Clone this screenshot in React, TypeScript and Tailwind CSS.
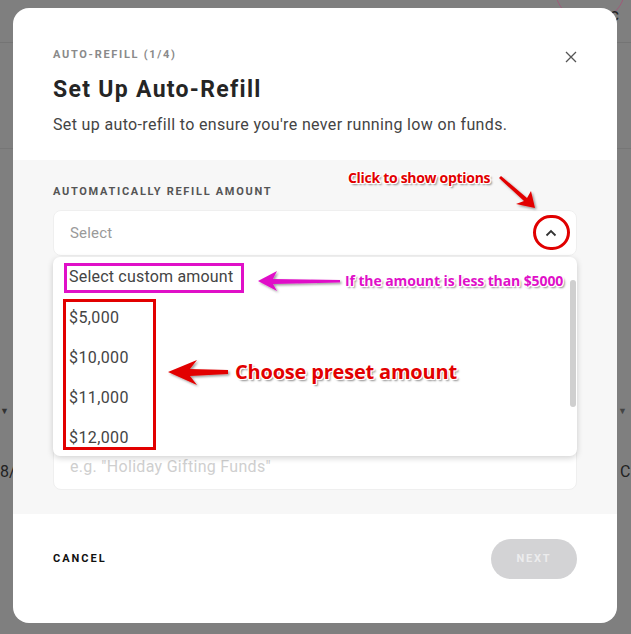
import React from "react";

const ui = { fontFamily: "Roboto, 'Liberation Sans', sans-serif" };
const ann = { fontFamily: "'Open Sans', 'Noto Sans', sans-serif" };

const outline =
  "[text-shadow:1px_1px_0_#fff,-1px_-1px_0_#fff,1px_-1px_0_#fff,-1px_1px_0_#fff,0_1px_0_#fff,0_-1px_0_#fff,1px_0_0_#fff,-1px_0_0_#fff,2px_2px_2px_rgba(0,0,0,0.45)]";

const options = ["$5,000", "$10,000", "$11,000", "$12,000"];

export default function App() {
  return (
    <div className="relative w-[631px] h-[634px] overflow-hidden bg-[#7f7f7f]" style={ui}>
      {/* underlying page fragments */}
      <div className="absolute inset-0 flex flex-col">
        <div className="h-[43px] border-b border-[#747474]" />
        <div className="h-[106px] border-b border-[#767676]" />
      </div>
      <div className="absolute left-[555px] top-[-40px] w-[70px] h-[60px] rounded-full border border-[#a05a7a]" />
      <div className="absolute left-[600px] top-[1px] text-[18px] text-[#222]">cc</div>
      <div className="absolute left-[0px] top-[405px] text-[9px] text-[#333]">▼</div>
      <div className="absolute left-[0px] top-[460px] text-[16px] text-[#222]">8/</div>
      <div className="absolute left-[618px] top-[405px] text-[9px] text-[#444]">▼</div>
      <div className="absolute left-[620px] top-[460px] text-[16px] text-[#222]">C</div>

      {/* modal */}
      <div className="absolute left-[13px] top-[8px] w-[604px] h-[615px] bg-white rounded-[16px] overflow-hidden flex flex-col">
        <div className="relative px-[40px] pt-[40px] h-[152px] shrink-0">
          <div className="text-[11px] font-bold tracking-[1.7px] text-[#8a8a8a] leading-[14px]">AUTO-REFILL (1/4)</div>
          <div className="mt-[14px] text-[23px] font-bold tracking-[1.3px] text-[#252525] leading-[28px]">Set Up Auto-Refill</div>
          <div className="mt-[11px] text-[16px] tracking-[0.35px] text-[#444] leading-[20px]">
            Set up auto-refill to ensure you're never running low on funds.
          </div>
          <svg className="absolute left-[552px] top-[43px]" width="12" height="12" viewBox="0 0 12 12">
            <path d="M1 1L11 11M11 1L1 11" stroke="#555" strokeWidth="1.3" fill="none" />
          </svg>
        </div>
        <div className="bg-[#f7f7f7] px-[40px] pt-[25px] h-[354px] shrink-0 flex flex-col">
          <div className="text-[11px] font-bold tracking-[1.7px] text-[#555] leading-[14px]">AUTOMATICALLY REFILL AMOUNT</div>
          <div className="relative mt-[11px] h-[46px] bg-white rounded-[8px] border border-[#efefef] flex items-center justify-between px-[16px]">
            <span className="text-[15px] tracking-[0.2px] text-[#9a9a9a]">Select</span>
            <svg width="12" height="8" viewBox="0 0 12 8" className="mr-[3px]">
              <path d="M1.5 6.5L6 2L10.5 6.5" stroke="#333" strokeWidth="1.8" fill="none" />
            </svg>
            {/* dropdown */}
            <div className="absolute left-[-1px] right-[-1px] top-[46px] h-[199px] bg-white rounded-[7px] shadow-[0_2px_6px_rgba(0,0,0,0.18)] z-10">
              <div className="flex flex-col pl-[16px] pt-[10px] text-[16px] tracking-[0.2px] text-[#444]">
                <div className="h-[41px] leading-[20px]">Select custom amount</div>
                {options.map((o) => (
                  <div key={o} className="h-[40px] leading-[20px] tracking-[0.4px]">{o}</div>
                ))}
              </div>
              <div className="absolute right-[1px] top-[23px] w-[6px] h-[127px] rounded-full bg-[#cfcfcf]" />
            </div>
          </div>
          <div className="mt-auto mb-[24px] h-[46px] bg-white rounded-[8px] border border-[#efefef] flex items-center px-[16px]">
            <span className="text-[16px] tracking-[0.3px] text-[#cfcfcf]">e.g. "Holiday Gifting Funds"</span>
          </div>
        </div>
        <div className="flex items-center justify-between px-[40px] pt-[25px]">
          <span className="text-[11px] font-bold tracking-[2px] text-[#111]">CANCEL</span>
          <div className="w-[86px] h-[40px] rounded-full bg-[#d3d3d5] flex items-center justify-center">
            <span className="text-[11px] font-bold tracking-[1.8px] text-[#ececed]">NEXT</span>
          </div>
        </div>
      </div>

      {/* annotations */}
      <div className="absolute inset-0 z-20">
        <div className="absolute left-[64px] top-[263px] w-[180px] h-[30px] border-[3px] border-[#e010c8]" />
        <div className="absolute left-[63px] top-[299px] w-[93px] h-[151px] border-[3px] border-[#e20000]" />
        <div className="absolute left-[533px] top-[215px] w-[37px] h-[35px] rounded-full border-[3px] border-[#e00000]" />

        <svg className="absolute left-0 top-0" width="631" height="634" viewBox="0 0 631 634">
          <defs>
            <filter id="sh" x="-20%" y="-50%" width="140%" height="200%">
              <feDropShadow dx="1.5" dy="1.5" stdDeviation="1" floodColor="#000" floodOpacity="0.4" />
            </filter>
          </defs>
          <polygon
            points="258,281 277,271 273,279 340,280 340,282.5 273,284 277,291"
            fill="#e010c8"
            filter="url(#sh)"
          />
          <polygon
            points="168,372 197,360 190,369 228,370 228,374 190,376 197,385"
            fill="#e20000"
            filter="url(#sh)"
          />
          <polygon
            points="499,178 501,176 527,198 531,191 535,208 516,204 524,201"
            fill="#e20000"
            filter="url(#sh)"
          />
        </svg>

        <div className={`absolute left-[348px] top-[167px] text-[14px] font-bold text-[#e20000] tracking-[-0.3px] ${outline}`} style={ann}>
          Click to show options
        </div>
        <div className={`absolute left-[345px] top-[270px] text-[14px] font-bold text-[#e010c8] tracking-[-0.1px] ${outline}`} style={ann}>
          If the amount is less than $5000
        </div>
        <div className={`absolute left-[235px] top-[357px] text-[20px] font-bold text-[#e20000] tracking-[-0.2px] ${outline}`} style={ann}>
          Choose preset amount
        </div>
      </div>
    </div>
  );
}
